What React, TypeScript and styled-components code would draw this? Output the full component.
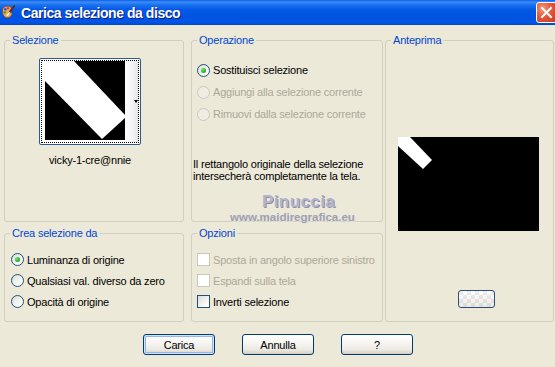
import React from "react";
import styled, { createGlobalStyle } from "styled-components";

const Global = createGlobalStyle`
  html, body { margin: 0; padding: 0; }
  body { background: #ECE9D8; font-family: "Liberation Sans", Arial, sans-serif; }
  * { box-sizing: border-box; }
`;

const Window = styled.div`
  width: 555px;
  height: 367px;
  overflow: hidden;
  position: relative;
  background: #ECE9D8;
  display: flex;
  flex-direction: column;
  font-family: "Liberation Sans", Arial, sans-serif;
  font-size: 11px;
  letter-spacing: -0.2px;
  color: #000;
`;

const TitleBar = styled.div`
  height: 25px;
  flex: none;
  display: flex;
  align-items: center;
  padding-left: 1px;
  background: linear-gradient(
    180deg,
    #0a5ceb 0%,
    #3c8ff7 8%,
    #1a6ff0 20%,
    #0258e6 40%,
    #0053e1 70%,
    #0056e8 88%,
    #0046cf 100%
  );
`;

const TitleIcon = styled.svg`
  width: 14px;
  height: 15px;
  flex: none;
  display: block;
`;

const TitleText = styled.span`
  flex: 1;
  margin-left: 6px;
  color: #fff;
  font-weight: bold;
  font-size: 14px;
  letter-spacing: -0.45px;
  text-shadow: 1px 1px 0 #0a1883;
  white-space: nowrap;
`;

const CloseButton = styled.div`
  width: 21px;
  height: 21px;
  flex: none;
  margin-right: -2px;
  border: 1px solid #fff;
  border-radius: 3px;
  background: radial-gradient(circle at 30% 30%, #f39a7c 0%, #e2583a 45%, #c3391b 100%);
  display: flex;
  align-items: center;
  justify-content: center;
`;

const Body = styled.div`
  flex: 1;
  display: flex;
  flex-direction: column;
  padding: 9px 1px 0 4px;
`;

const Panels = styled.div`
  display: grid;
  grid-template-columns: 180px 7px 192px 2px 169px;
  grid-template-rows: 188px 95px;
  row-gap: 5px;
`;

const Group = styled.fieldset<{ $col: number; $row: string }>`
  grid-column: ${(p) => p.$col};
  grid-row: ${(p) => p.$row};
  margin: 0;
  padding: 0;
  min-width: 0;
  border: 1px solid #d0d0bf;
  border-radius: 3px;
  display: flex;
  flex-direction: column;
`;

const Legend = styled.legend`
  margin-left: 5px;
  padding: 0 2px;
  color: #0046d5;
  font-size: 11px;
  line-height: 13px;
`;

const SelBody = styled.div`
  display: flex;
  flex-direction: column;
  align-items: center;
  padding: 11px 8px 0 0;
`;

const Thumb = styled.div`
  width: 102px;
  height: 87px;
  border: 1px solid #2b5a8d;
  border-radius: 2px;
  background: #fff;
  padding: 1px;
`;

const ThumbFocus = styled.div`
  height: 100%;
  border: 1px dotted #000;
  display: flex;
  padding-left: 3px;
`;

const ThumbImage = styled.svg`
  width: 80px;
  height: 79px;
  flex: none;
  display: block;
`;

const ThumbDrop = styled.div`
  flex: 1;
  display: flex;
  align-items: center;
  justify-content: flex-end;
  background: linear-gradient(90deg, #ffffff 0%, #f2f2f2 60%, #e4e4e4 100%);
`;

const DropArrow = styled.span`
  width: 0;
  height: 0;
  border-left: 2.5px solid transparent;
  border-right: 2.5px solid transparent;
  border-top: 3px solid #000;
`;

const Caption = styled.div`
  margin-top: 9px;
  line-height: 13px;
`;

const Column = styled.div<{ $top: number; $left: number }>`
  display: flex;
  flex-direction: column;
  padding: ${(p) => p.$top}px 0 0 ${(p) => p.$left}px;
`;

const OptionRow = styled.div<{ $h: number; $disabled?: boolean }>`
  height: ${(p) => p.$h}px;
  display: flex;
  align-items: center;
  gap: 3px;
  color: ${(p) => (p.$disabled ? "#ACA899" : "#000")};
  white-space: nowrap;
`;

const Radio = styled.span<{ $checked?: boolean; $disabled?: boolean }>`
  width: 13px;
  height: 13px;
  flex: none;
  border-radius: 50%;
  border: 1px solid ${(p) => (p.$disabled ? "#CAC8BB" : "#1C5180")};
  background: ${(p) =>
    p.$disabled ? "#EFEDE3" : "linear-gradient(135deg, #DCDCD7 0%, #F4F4F0 55%, #FFFFFF 90%)"};
  display: flex;
  align-items: center;
  justify-content: center;
  &::after {
    content: "";
    display: ${(p) => (p.$checked ? "block" : "none")};
    width: 5px;
    height: 5px;
    border-radius: 50%;
    background: radial-gradient(circle at 35% 35%, #7ee47a 0%, #2fb12c 55%, #1d8f1d 100%);
  }
`;

const Check = styled.span<{ $disabled?: boolean }>`
  width: 13px;
  height: 13px;
  flex: none;
  border: 1px solid ${(p) => (p.$disabled ? "#CAC8BB" : "#1C5180")};
  background: ${(p) =>
    p.$disabled ? "#FFFFFF" : "linear-gradient(135deg, #DCDCD7 0%, #F2F2EE 55%, #FFFFFF 90%)"};
`;

const Note = styled.div`
  margin: 33px 0 0 1px;
  line-height: 12px;
`;

const PreviewBody = styled.div`
  display: flex;
  flex-direction: column;
  align-items: flex-start;
`;

const PreviewImage = styled.svg`
  width: 141px;
  height: 94px;
  display: block;
  margin: 90px 0 0 12px;
`;

const PreviewToggle = styled.div`
  width: 37px;
  height: 18px;
  margin: 59px 0 0 72px;
  border: 1px solid #2a4f7e;
  border-radius: 3px;
  background: linear-gradient(180deg, rgba(255, 255, 255, 0.35), rgba(214, 208, 197, 0.45)),
    repeating-conic-gradient(#ffffff 0 25%, #e2e2e2 0 50%) 0 0 / 8px 8px;
`;

const ButtonRow = styled.div`
  margin-top: 12px;
  padding-right: 2px;
  display: flex;
  justify-content: center;
  gap: 27px;
`;

const Button = styled.button<{ $default?: boolean }>`
  width: 72px;
  height: 21px;
  padding: 0;
  font-family: "Liberation Sans", Arial, sans-serif;
  font-size: 11px;
  letter-spacing: -0.2px;
  color: #000;
  border: 1px solid #003c74;
  border-radius: 3px;
  background: linear-gradient(180deg, #ffffff 0%, #f7f6f2 40%, #eceae3 75%, #d9d3c8 100%);
  box-shadow: ${(p) =>
    p.$default
      ? "inset 0 0 0 1px #CEE3FC, inset 0 0 0 2px #93B5E8"
      : "inset 0 -1px 0 #D6D0C5"};
`;

const Watermark = styled.div`
  position: absolute;
  left: 262px;
  top: 193px;
  font-family: "Liberation Sans", Arial, sans-serif;
  font-weight: bold;
  font-size: 17px;
  line-height: 17px;
  letter-spacing: 0.4px;
  color: #b4b4cb;
  text-shadow: 1px 1px 0 #8e8ea6;
  pointer-events: none;
`;

const WatermarkUrl = styled.div`
  position: absolute;
  left: 230px;
  top: 211px;
  font-family: "Liberation Sans", Arial, sans-serif;
  font-weight: bold;
  font-size: 11.5px;
  line-height: 12px;
  letter-spacing: 0;
  color: #a0a0b4;
  text-shadow: 1px 1px 0 #e4e2d8;
  pointer-events: none;
`;

export default function App() {
  return (
    <Window>
      <Global />
      <TitleBar>
        <TitleIcon viewBox="0 0 14 15">
          <path
            d="M1.5 5 C1.5 2 5 0.8 8.5 1.5 C10.5 2 11 3.8 9.6 4.8 C8.8 5.5 9.2 6.8 10.3 7.3 C11.8 8.2 10.8 11.5 7.5 12.6 C4 13.6 1.2 10.5 1.5 5 Z"
            fill="#E9A35A"
            stroke="#8A4A1A"
            strokeWidth="0.8"
          />
          <circle cx="4.3" cy="4.2" r="1.2" fill="#1F4FE0" />
          <circle cx="7" cy="3.2" r="1" fill="#E02424" />
          <circle cx="3.8" cy="7.4" r="1.1" fill="#22A322" />
          <circle cx="6" cy="10" r="1.1" fill="#F4E02A" />
          <path d="M13.3 1 L8 8.2" stroke="#5A2A0A" strokeWidth="1.7" strokeLinecap="round" />
          <path d="M8.2 7.8 L6.6 10.2" stroke="#F0F0F0" strokeWidth="1.6" strokeLinecap="round" />
        </TitleIcon>
        <TitleText>Carica selezione da disco</TitleText>
        <CloseButton>
          <svg width="13" height="13" viewBox="0 0 13 13">
            <path d="M2 2 L11 11 M11 2 L2 11" stroke="#fff" strokeWidth="2" strokeLinecap="square" />
          </svg>
        </CloseButton>
      </TitleBar>

      <Body>
        <Panels>
          <Group $col={1} $row="1">
            <Legend>Selezione</Legend>
            <SelBody>
              <Thumb>
                <ThumbFocus>
                  <ThumbImage viewBox="0 0 80 79">
                    <rect width="80" height="79" fill="#000" />
                    <polygon points="0,0 29,0 80,54 80,57 57,78 0,20" fill="#fff" />
                  </ThumbImage>
                  <ThumbDrop>
                    <DropArrow />
                  </ThumbDrop>
                </ThumbFocus>
              </Thumb>
              <Caption>vicky-1-cre@nnie</Caption>
            </SelBody>
          </Group>

          <Group $col={3} $row="1">
            <Legend>Operazione</Legend>
            <Column $top={12} $left={0}>
              <Column $top={0} $left={5}>
                <OptionRow $h={22}>
                  <Radio $checked />
                  Sostituisci selezione
                </OptionRow>
                <OptionRow $h={22} $disabled>
                  <Radio $disabled />
                  Aggiungi alla selezione corrente
                </OptionRow>
                <OptionRow $h={22} $disabled>
                  <Radio $disabled />
                  Rimuovi dalla selezione corrente
                </OptionRow>
              </Column>
              <Note>
                Il rettangolo originale della selezione
                <br />
                intersecherà completamente la tela.
              </Note>
            </Column>
          </Group>

          <Group $col={5} $row="1 / span 2">
            <Legend>Anteprima</Legend>
            <PreviewBody>
              <PreviewImage viewBox="0 0 141 94">
                <rect width="141" height="94" fill="#000" />
                <polygon points="0,0 12,0 34,23 25,32 0,9" fill="#fff" />
              </PreviewImage>
              <PreviewToggle />
            </PreviewBody>
          </Group>

          <Group $col={1} $row="2">
            <Legend>Crea selezione da</Legend>
            <Column $top={9} $left={6}>
              <OptionRow $h={21}>
                <Radio $checked />
                Luminanza di origine
              </OptionRow>
              <OptionRow $h={21}>
                <Radio />
                Qualsiasi val. diverso da zero
              </OptionRow>
              <OptionRow $h={21}>
                <Radio />
                Opacità di origine
              </OptionRow>
            </Column>
          </Group>

          <Group $col={3} $row="2">
            <Legend>Opzioni</Legend>
            <Column $top={9} $left={5}>
              <OptionRow $h={21} $disabled>
                <Check $disabled />
                Sposta in angolo superiore sinistro
              </OptionRow>
              <OptionRow $h={21} $disabled>
                <Check $disabled />
                Espandi sulla tela
              </OptionRow>
              <OptionRow $h={21}>
                <Check />
                Inverti selezione
              </OptionRow>
            </Column>
          </Group>
        </Panels>

        <ButtonRow>
          <Button $default>Carica</Button>
          <Button>Annulla</Button>
          <Button>?</Button>
        </ButtonRow>
      </Body>

      <Watermark>Pinuccia</Watermark>
      <WatermarkUrl>www.maidiregrafica.eu</WatermarkUrl>
    </Window>
  );
}
